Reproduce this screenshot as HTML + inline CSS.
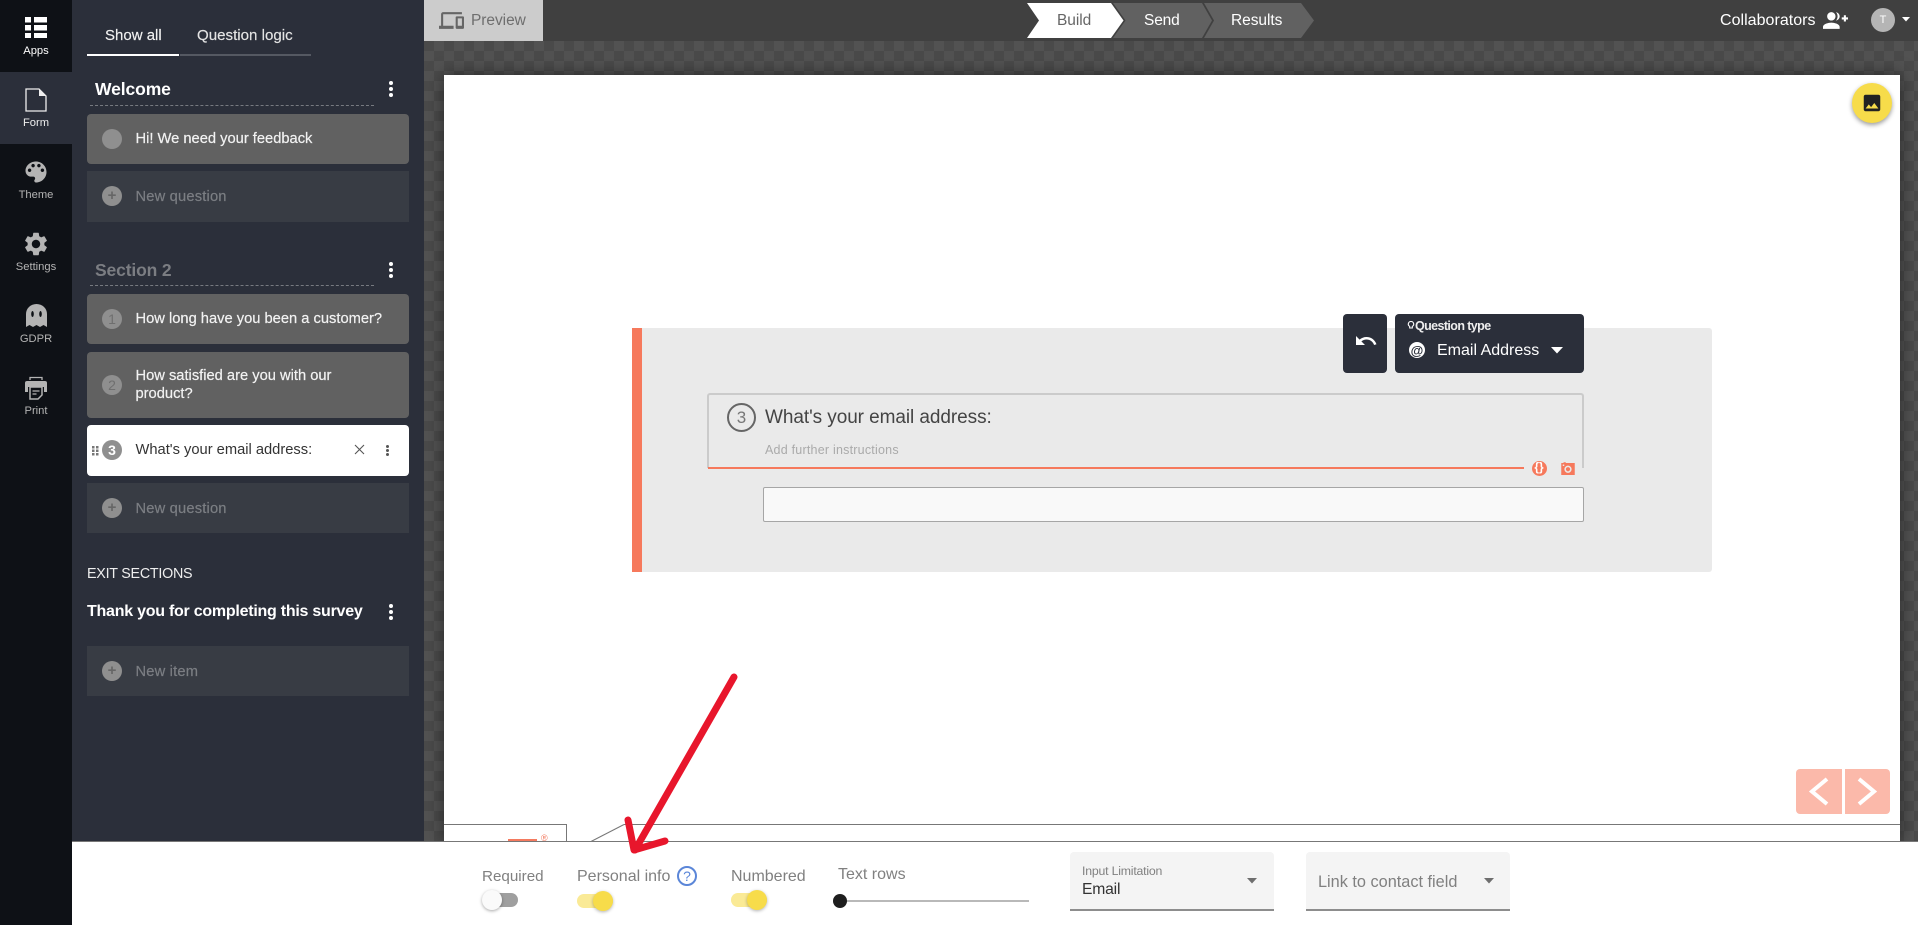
<!DOCTYPE html>
<html lang="en"><head><meta charset="utf-8"><title>Survey builder</title>
<style>
html,body{margin:0;padding:0;width:1918px;height:925px;overflow:hidden;background:#444;font-family:"Liberation Sans",Arial,sans-serif}
#root{position:relative;width:1918px;height:925px;overflow:hidden}
.a,.t,svg.i{position:absolute}
.t{white-space:nowrap;line-height:1}
.rail{left:0;top:0;width:72px;height:925px;background:#0e1116}
.rl{left:0;width:72px;text-align:center;font-size:11.2px;color:#b4b4b4}
.side{left:72px;top:0;width:352px;height:925px;background:#2b2f3a}
.card{left:87px;width:322px;border-radius:4px;background:#616161}
.new{left:87px;width:322px;background:#383c44}
.num{left:102px;width:20px;height:20px;border-radius:50%;background:#8f8f8f;color:#6f6f6f;font-size:14px;line-height:20px;text-align:center}
.ct{left:135.5px;font-size:14.7px;color:#f2f2f2;-webkit-text-stroke:.2px #f2f2f2}
.nt{left:135.5px;font-size:14.7px;color:#7b7e83;letter-spacing:.18px;-webkit-text-stroke:.2px #7b7e83}
.dash{left:90px;width:284px;border-top:1px dashed #777a80;height:0}
.dot{width:4px;height:4px;border-radius:50%;background:#fff;left:389px}
.lbl{font-size:16px;color:#808080}
.chk{background-color:#4c4c4c;background-image:conic-gradient(#525252 25%,#4a4a4a 0 50%,#525252 0 75%,#4a4a4a 0);background-size:20px 20px}
.sel{width:204px;height:57px;background:#f4f4f4;border-bottom:2px solid #8d8d8d;border-radius:4px 4px 0 0}
</style></head><body><div id="root">

<!-- main checker -->
<div class="a chk" style="left:424px;top:41px;width:1494px;height:800px"></div>
<div class="a" style="left:424px;top:0;width:1494px;height:41px;background:#404040"></div>

<!-- canvas -->
<div class="a" style="left:444px;top:75px;width:1456px;height:766px;background:#fff;box-shadow:0 0 16px rgba(0,0,0,.5)"></div>
<div class="a" style="left:444px;top:824px;width:123px;height:17px;border-top:1px solid #777;border-right:1px solid #777;box-sizing:border-box"></div>
<div class="a" style="left:624px;top:824px;width:1276px;height:1px;background:#777"></div>
<svg class="i" style="left:585px;top:822px" width="45" height="20" viewBox="0 0 45 20"><path d="M6 19.500L39 2.500" stroke="#777" stroke-width="1" fill="none"/></svg>
<div class="a" style="left:508px;top:839px;width:29px;height:2px;background:#f47a5f"></div>
<div class="t" style="left:541px;top:834px;font-size:9px;color:#f47a5f">®</div>

<!-- Question block -->
<div class="a" style="left:632px;top:328px;width:1080px;height:244px;background:#eaeaea;border-radius:0 3px 3px 0"></div>
<div class="a" style="left:632px;top:328px;width:10px;height:244px;background:#f6795c"></div>
<div class="a" style="left:707px;top:393px;width:877px;height:75px;box-sizing:border-box;border:2px solid #cbcbcb;border-bottom:0;border-radius:3px 3px 0 0"></div>
<div class="a" style="left:708px;top:467px;width:816px;height:2px;background:#f6795c"></div>
<div class="a" style="left:727px;top:403px;width:29px;height:29px;box-sizing:border-box;border:2px solid #666;border-radius:50%;font-size:17px;color:#777;text-align:center;line-height:25px">3</div>
<div class="t" style="left:765px;top:408px;font-size:19px;color:#444;letter-spacing:-.07px">What's your email address:</div>
<div class="t" style="left:765px;top:443.500px;font-size:12.500px;color:#aaa;letter-spacing:.22px">Add further instructions</div>
<div class="a" style="left:763px;top:487px;width:821px;height:35px;box-sizing:border-box;background:#f9f9f9;border:1px solid #a6a6a6;border-radius:2px"></div>
<!-- {} icon -->
<div class="a" style="left:1531.500px;top:460.500px;width:15px;height:15px;border-radius:50%;background:#f6795c"></div>
<div class="t" style="left:1531.500px;top:461px;width:15px;text-align:center;font-size:12px;font-weight:bold;color:#fff">{}</div>
<svg class="i" style="left:1559px;top:459.500px" width="18" height="18" viewBox="0 0 24 24"><path fill="#f6795c" d="M3 4h3V3h3v1h12v16H3zM12 7.500a4.800 4.800 0 1 0 .01 0zM12 9.500a2.800 2.800 0 1 1-.01 0zM5 6v2h2V6z" fill-rule="evenodd"/></svg>

<!-- undo / type -->
<div class="a" style="left:1343px;top:314px;width:44px;height:59px;background:#2b2f3a;border-radius:4px"></div>
<svg class="i" style="left:1354px;top:329px" width="24" height="24" viewBox="0 0 24 24"><path fill="#fff" d="M12.500 8c-2.650 0-5.050.99-6.900 2.600L2 7v9h9l-3.620-3.620c1.390-1.160 3.160-1.880 5.120-1.880 3.540 0 6.550 2.310 7.600 5.500l2.370-.78C21.080 11.030 17.150 8 12.500 8z"/></svg>
<div class="a" style="left:1395px;top:314px;width:189px;height:59px;background:#2b2f3a;border-radius:4px"></div>
<svg class="i" style="left:1406px;top:320px" width="10" height="12" viewBox="0 0 10 12"><path d="M5 1.500a2.600 2.600 0 0 0-1.300 4.900V8h2.600V6.400A2.600 2.600 0 0 0 5 1.500z" fill="none" stroke="#fff" stroke-width="1.100"/></svg>
<div class="t" style="left:1415px;top:320px;font-size:12.500px;font-weight:bold;color:#eee;letter-spacing:-.6px">Question type</div>
<div class="a" style="left:1409px;top:342px;width:16px;height:16px;border-radius:50%;background:#fff"></div>
<div class="t" style="left:1409px;top:343.500px;width:16px;text-align:center;font-size:13px;font-weight:bold;color:#2b2f3a">@</div>
<div class="t" style="left:1437px;top:343px;font-size:16px;color:#fff">Email Address</div>
<svg class="i" style="left:1551px;top:347px" width="12" height="7" viewBox="0 0 12 7"><path d="M0 0h12L6 6.500z" fill="#fff"/></svg>

<!-- yellow image button -->
<div class="a" style="left:1852px;top:83px;width:40px;height:40px;border-radius:50%;background:#f7dc4a;box-shadow:0 2px 5px rgba(0,0,0,.4)"></div>
<svg class="i" style="left:1861px;top:92px" width="22" height="22" viewBox="0 0 24 24"><path fill="#222" d="M21 19V5c0-1.100-.9-2-2-2H5c-1.100 0-2 .9-2 2v14c0 1.100.9 2 2 2h14c1.100 0 2-.9 2-2zM8.500 13.500l2.500 3.010L14.500 12l4.500 6H5l3.500-4.500z"/></svg>

<!-- arrows -->
<div class="a" style="left:1796px;top:769px;width:46px;height:45px;background:#fbb9aa;border-radius:4px 0 0 4px"></div>
<div class="a" style="left:1845px;top:769px;width:45px;height:45px;background:#fbb9aa;border-radius:0 4px 4px 0"></div>
<svg class="i" style="left:1796px;top:769px" width="94" height="45" viewBox="0 0 94 45"><path d="M31 10L16 22.500 31 35M63 10L78 22.500 63 35" fill="none" stroke="#fff" stroke-width="4"/></svg>

<!-- top left preview -->
<div class="a" style="left:424px;top:0;width:119px;height:41px;background:#ccc"></div>
<svg class="i" style="left:439px;top:8px" width="25" height="25" viewBox="0 0 24 24"><path fill="#666" d="M4 6h18V4H4c-1.100 0-2 .9-2 2v11H0v3h14v-3H4V6zm19 2h-6c-.55 0-1 .45-1 1v10c0 .55.45 1 1 1h6c.55 0 1-.45 1-1V9c0-.55-.45-1-1-1zm-1 9h-4v-7h4v7z"/></svg>
<div class="t" style="left:471px;top:13px;font-size:15.500px;color:#6e6e6e;letter-spacing:-.05px">Preview</div>

<!-- steps -->
<svg class="i" style="left:1020px;top:0" width="300" height="41" viewBox="0 0 300 41">
<path d="M180 3h101l13 17.500-13 17.500H180z" fill="#616161"/>
<path d="M95 3h89l10 17.500-10 17.500H95z" fill="#404040"/>
<path d="M93 3h89l10 17.500-10 17.500H93z" fill="#616161"/>
<path d="M7 3h86l12.500 17.500L93 38H7l12-17.500z" fill="#404040"/>
<path d="M7 3h84l12.500 17.500L91 38H7l12-17.500z" fill="#fff"/>
</svg>
<div class="t" style="left:1057px;top:12.500px;font-size:15.500px;color:#666;letter-spacing:-.05px">Build</div>
<div class="t" style="left:1144px;top:12.500px;font-size:15.500px;color:#fff;letter-spacing:-.15px">Send</div>
<div class="t" style="left:1231px;top:12.500px;font-size:15.500px;color:#fff;letter-spacing:-.05px">Results</div>

<div class="t" style="left:1720px;top:12.500px;font-size:16px;color:#fff;letter-spacing:.03px">Collaborators</div>
<svg class="i" style="left:1823px;top:8px" width="25" height="25" viewBox="0 0 24 24"><path fill="#fff" d="M22 9V7h-2v2h-2v2h2v2h2v-2h2V9h-2zM8 12c2.210 0 4-1.790 4-4s-1.790-4-4-4-4 1.790-4 4 1.790 4 4 4zm0 2c-2.670 0-8 1.340-8 4v2h16v-2c0-2.660-5.330-4-8-4zM12.510 4.050C13.430 5.110 14 6.490 14 8s-.57 2.890-1.490 3.950C14.470 11.700 16 10.040 16 8s-1.530-3.700-3.490-3.950z"/></svg>
<div class="a" style="left:1871px;top:8px;width:24px;height:24px;border-radius:50%;background:#b5b5b5;color:#fff;font-size:11px;line-height:24px;text-align:center">T</div>
<svg class="i" style="left:1902px;top:17px" width="8" height="5" viewBox="0 0 8 5"><path d="M0 0h8L4 4.500z" fill="#fff"/></svg>

<!-- sidebar -->
<div class="a side"></div>
<div class="t" style="left:105px;top:27.500px;font-size:15px;color:#f2f2f2;-webkit-text-stroke:.15px #f2f2f2">Show all</div>
<div class="t" style="left:197px;top:27.500px;font-size:15.100px;color:#e4e4e4;-webkit-text-stroke:.15px #e4e4e4">Question logic</div>
<div class="a" style="left:87px;top:54px;width:92px;height:2px;background:#fff"></div>
<div class="a" style="left:180px;top:54px;width:131px;height:2px;background:#555962"></div>

<div class="t" style="left:95px;top:81px;font-size:17.500px;font-weight:bold;color:#fff;letter-spacing:-.1px">Welcome</div>
<div class="a dash" style="top:105px"></div>
<div class="a dot" style="top:81px"></div><div class="a dot" style="top:87px"></div><div class="a dot" style="top:93px"></div>

<div class="a card" style="top:114px;height:50px"></div>
<div class="a num" style="top:129px"></div>
<div class="t ct" style="top:131.500px">Hi! We need your feedback</div>

<div class="a new" style="top:171px;height:51px"></div>
<div class="a num" style="top:186px;color:#666;font-size:15px;font-weight:bold">+</div>
<div class="t nt" style="top:189.500px">New question</div>

<div class="t" style="left:95px;top:262px;font-size:17.500px;font-weight:bold;color:#7b7d82;letter-spacing:-.15px">Section 2</div>
<div class="a dash" style="top:285px"></div>
<div class="a dot" style="top:262px"></div><div class="a dot" style="top:268px"></div><div class="a dot" style="top:274px"></div>

<div class="a card" style="top:294px;height:50px"></div>
<div class="a num" style="top:309px">1</div>
<div class="t ct" style="top:311.500px">How long have you been a customer?</div>

<div class="a card" style="top:352px;height:66px"></div>
<div class="a num" style="top:375px">2</div>
<div class="t ct" style="top:369px">How satisfied are you with our</div>
<div class="t ct" style="top:387px">product?</div>

<div class="a card" style="top:425px;height:51px;background:#fff"></div>
<div class="a num" style="top:440px;color:#fff;font-weight:bold">3</div>
<svg class="i" style="left:92px;top:446px" width="8" height="10" viewBox="0 0 8 10"><g fill="#777"><rect x="0" y="0" width="2.500" height="2.500"/><rect x="4" y="0" width="2.500" height="2.500"/><rect x="0" y="3.500" width="2.500" height="2.500"/><rect x="4" y="3.500" width="2.500" height="2.500"/><rect x="0" y="7" width="2.500" height="2.500"/><rect x="4" y="7" width="2.500" height="2.500"/></g></svg>
<div class="t ct" style="top:442.500px;color:#333;-webkit-text-stroke:0">What's your email address:</div>
<svg class="i" style="left:354px;top:444px" width="11" height="11" viewBox="0 0 11 11"><path d="M1 1l9 9M10 1l-9 9" stroke="#555" stroke-width="1.100" fill="none"/></svg>
<div class="a" style="left:386px;top:445px;width:3px;height:3px;border-radius:50%;background:#555"></div>
<div class="a" style="left:386px;top:449px;width:3px;height:3px;border-radius:50%;background:#555"></div>
<div class="a" style="left:386px;top:453px;width:3px;height:3px;border-radius:50%;background:#555"></div>

<div class="a new" style="top:483px;height:50px"></div>
<div class="a num" style="top:498px;color:#666;font-size:15px;font-weight:bold">+</div>
<div class="t nt" style="top:501.500px">New question</div>

<div class="t" style="left:87px;top:567px;font-size:14.300px;color:#eee;letter-spacing:-.25px">EXIT SECTIONS</div>
<div class="t" style="left:87px;top:604px;font-size:16px;font-weight:bold;color:#fff;letter-spacing:-.25px">Thank you for completing this survey</div>
<div class="a dot" style="top:604px"></div><div class="a dot" style="top:610px"></div><div class="a dot" style="top:616px"></div>

<div class="a new" style="top:646px;height:50px"></div>
<div class="a num" style="top:661px;color:#666;font-size:15px;font-weight:bold">+</div>
<div class="t nt" style="top:664.500px">New item</div>

<!-- bottom panel -->
<div class="a" style="left:72px;top:841px;width:1846px;height:84px;background:#fff;border-top:1px solid #777;box-sizing:border-box"></div>

<!-- red arrow -->
<svg class="i" style="left:600px;top:660px" width="150" height="210" viewBox="0 0 150 210"><path d="M134 17L35 190M28 160L34 190 65 181" fill="none" stroke="#e8162c" stroke-width="7" stroke-linecap="round" stroke-linejoin="round"/></svg>

<div class="t lbl" style="left:482px;top:868.500px;font-size:15.200px">Required</div>
<div class="t lbl" style="left:577px;top:868.500px">Personal info</div>
<div class="a" style="left:677px;top:866px;width:20px;height:20px;box-sizing:border-box;border:2px solid #5b86d8;border-radius:50%;color:#5b86d8;font-size:14px;line-height:16px;text-align:center">?</div>
<div class="t lbl" style="left:731px;top:868.500px">Numbered</div>
<div class="t lbl" style="left:838px;top:866.500px">Text rows</div>

<div class="a" style="left:484px;top:893px;width:34px;height:14px;border-radius:7px;background:#9f9f9f"></div>
<div class="a" style="left:482px;top:890px;width:20px;height:20px;border-radius:50%;background:#fafafa;box-shadow:0 1px 3px rgba(0,0,0,.35)"></div>
<div class="a" style="left:577px;top:894px;width:36px;height:14px;border-radius:7px;background:#faea96"></div>
<div class="a" style="left:593px;top:891px;width:20px;height:20px;border-radius:50%;background:#f7dc4a;box-shadow:0 1px 3px rgba(0,0,0,.3)"></div>
<div class="a" style="left:731px;top:893px;width:36px;height:14px;border-radius:7px;background:#faea96"></div>
<div class="a" style="left:747px;top:890px;width:20px;height:20px;border-radius:50%;background:#f7dc4a;box-shadow:0 1px 3px rgba(0,0,0,.3)"></div>
<div class="a" style="left:840px;top:900px;width:189px;height:2px;background:#b9b9b9"></div>
<div class="a" style="left:833px;top:894px;width:14px;height:14px;border-radius:50%;background:#1e1e1e"></div>

<div class="a sel" style="left:1070px;top:852px"></div>
<div class="t" style="left:1082px;top:864.500px;font-size:12.300px;color:#808080;letter-spacing:-.2px">Input Limitation</div>
<div class="t" style="left:1082px;top:882px;font-size:15.700px;color:#333;letter-spacing:-.2px">Email</div>
<svg class="i" style="left:1247px;top:878px" width="10" height="6" viewBox="0 0 10 6"><path d="M0 0h10L5 5.500z" fill="#6e6e6e"/></svg>
<div class="a sel" style="left:1306px;top:852px"></div>
<div class="t" style="left:1318px;top:873.500px;font-size:16.300px;color:#808080">Link to contact field</div>
<svg class="i" style="left:1484px;top:878px" width="10" height="6" viewBox="0 0 10 6"><path d="M0 0h10L5 5.500z" fill="#6e6e6e"/></svg>

<!-- rail -->
<div class="a rail"></div>
<div class="a" style="left:0;top:72px;width:72px;height:72px;background:#2b2f3a"></div>
<svg class="i" style="left:25px;top:17px" width="22" height="21" viewBox="0 0 22 21"><g fill="#fff"><rect x="0" y="0" width="6" height="5.500"/><rect x="9" y="0" width="13" height="5.500"/><rect x="0" y="8" width="6" height="5.500"/><rect x="9" y="8" width="13" height="5.500"/><rect x="0" y="16" width="6" height="5"/><rect x="9" y="16" width="13" height="5"/></g></svg>
<div class="t rl" style="top:45.500px;color:#fff">Apps</div>
<svg class="i" style="left:25px;top:88px" width="22" height="24" viewBox="0 0 22 24"><path d="M1 1h13l7 7v15H1z" fill="none" stroke="#eee" stroke-width="1.300"/><path d="M14 1l7 7h-7z" fill="#eee"/></svg>
<div class="t rl" style="top:117.500px;color:#eee">Form</div>
<svg class="i" style="left:22px;top:158px" width="28" height="28" viewBox="0 0 24 24"><path transform="translate(24 0) scale(-1 1)" fill="#b4b4b4" d="M12 3c-4.970 0-9 4.030-9 9s4.030 9 9 9c.83 0 1.500-.67 1.500-1.500 0-.39-.15-.74-.39-1.010-.23-.26-.38-.61-.38-.99 0-.83.67-1.500 1.500-1.500H16c2.760 0 5-2.240 5-5 0-4.420-4.030-8-9-8zm-5.500 9c-.83 0-1.500-.67-1.500-1.500S5.670 9 6.500 9 8 9.670 8 10.500 7.330 12 6.500 12zm3-4C8.670 8 8 7.330 8 6.500S8.670 5 9.500 5s1.500.67 1.500 1.500S10.330 8 9.500 8zm5 0c-.83 0-1.500-.67-1.500-1.500S13.670 5 14.500 5s1.500.67 1.500 1.500S15.330 8 14.500 8zm3 4c-.83 0-1.500-.67-1.500-1.500S16.670 9 17.500 9s1.500.67 1.500 1.500-.67 1.500-1.500 1.500z"/></svg>
<div class="t rl" style="top:189.500px">Theme</div>
<svg class="i" style="left:22px;top:230px" width="28" height="28" viewBox="0 0 24 24"><path fill="#b4b4b4" d="M19.140 12.940c.04-.3.06-.61.06-.94 0-.32-.02-.64-.07-.94l2.030-1.580c.18-.14.23-.41.12-.61l-1.920-3.320c-.12-.22-.37-.29-.59-.22l-2.390.96c-.5-.38-1.030-.7-1.620-.94l-.36-2.540c-.04-.24-.24-.41-.48-.41h-3.840c-.24 0-.43.17-.47.41l-.36 2.540c-.59.24-1.130.57-1.620.94l-2.390-.96c-.22-.08-.47 0-.59.22L2.740 8.870c-.12.21-.08.47.12.61l2.030 1.580c-.05.3-.09.63-.09.94s.02.64.07.94l-2.030 1.580c-.18.14-.23.41-.12.61l1.920 3.320c.12.22.37.29.59.22l2.390-.96c.5.38 1.030.7 1.620.94l.36 2.540c.05.24.24.41.48.41h3.840c.24 0 .44-.17.47-.41l.36-2.540c.59-.24 1.130-.56 1.620-.94l2.390.96c.22.08.47 0 .59-.22l1.920-3.320c.12-.22.07-.47-.12-.61l-2.010-1.580zM12 15.600c-1.980 0-3.600-1.620-3.600-3.600s1.620-3.600 3.600-3.600 3.600 1.620 3.600 3.600-1.620 3.600-3.600 3.600z"/></svg>
<div class="t rl" style="top:261.500px">Settings</div>
<svg class="i" style="left:26px;top:304px" width="21" height="24" viewBox="0 0 21 24"><path fill="#b4b4b4" d="M0 10a10.500 10 0 0 1 21 0v13l-3.500-2-3.500 2-3.500-2L7 23l-3.500-2L0 23z"/><ellipse cx="6.500" cy="10" rx="1.300" ry="3" fill="#0e1116"/><ellipse cx="14.500" cy="10" rx="1.300" ry="3" fill="#0e1116"/></svg>
<div class="t rl" style="top:333.500px">GDPR</div>
<svg class="i" style="left:25px;top:376px" width="22" height="24" viewBox="0 0 22 24"><path fill="none" stroke="#b4b4b4" stroke-width="1.300" d="M5 4V1.500h12V4"/><path fill="#b4b4b4" d="M2 5h18a2 2 0 0 1 2 2v9h-3v-5H3v5H0V7a2 2 0 0 1 2-2z"/><path fill="#0e1116" stroke="#b4b4b4" stroke-width="1.500" d="M5 11h12v8l-4 4H5z"/><path d="M7.500 15h7M7.500 18h4" stroke="#b4b4b4" stroke-width="1.300"/></svg>
<div class="t rl" style="top:405.500px">Print</div>

</div></body></html>
